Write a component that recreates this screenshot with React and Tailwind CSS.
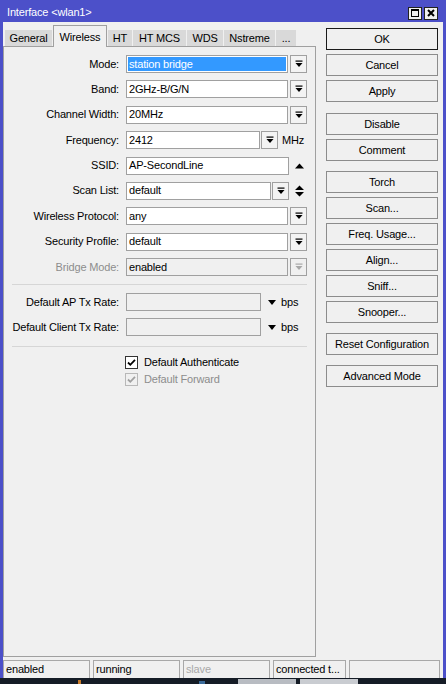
import React from 'react';

const DropIcon = ({ color = '#000' }) => (
  <svg width="8" height="8" viewBox="0 0 8 8">
    <rect x="0.5" y="0.5" width="7" height="1.2" fill={color} />
    <path d="M0.5 3h7L4 7z" fill={color} />
  </svg>
);

const DropButton = ({ disabled }) => (
  <div
    className={`w-[17px] h-[18px] flex items-center justify-center border border-[#a0a0a0] ${
      disabled ? 'bg-[#f0f0f0]' : 'bg-[#f3f3f3]'
    }`}
  >
    <DropIcon color={disabled ? '#a8a8a8' : '#000'} />
  </div>
);

const Field = ({ value, width = 162, selected, disabled }) => (
  <div
    className={`h-[18px] border border-[#a0a0a0] flex items-center ${
      disabled ? 'bg-[#f0f0f0]' : 'bg-white'
    } ${selected ? 'p-px' : ''}`}
    style={{ width }}
  >
    {selected ? (
      <div className="h-full w-full bg-[#3399ff] text-white flex items-center px-[1px]">{value}</div>
    ) : (
      <span className="px-[2px] text-black">{value}</span>
    )}
  </div>
);

const Row = ({ label, dim, children }) => (
  <div className="flex items-center h-[18px]">
    <div className={`w-[115px] text-right ${dim ? 'text-[#8d8d8d]' : 'text-black'}`}>{label}</div>
    <div className="ml-[7px] flex items-center">{children}</div>
  </div>
);

const Check = ({ disabled }) => (
  <div
    className={`w-[13px] h-[13px] border flex items-center justify-center ${
      disabled ? 'border-[#b8b8b8] bg-[#f0f0f0]' : 'border-[#333] bg-white'
    }`}
  >
    <svg width="9" height="9" viewBox="0 0 9 9">
      <path d="M1 4.5l2.3 2.3L8 1.8" fill="none" stroke={disabled ? '#a0a0a0' : '#000'} strokeWidth="1.8" />
    </svg>
  </div>
);

const Btn = ({ children, className = '', dark }) => (
  <div
    className={`h-[22px] w-[112px] flex items-center justify-center border ${
      dark ? 'border-[#1a1a1a]' : 'border-[#8c8c8c]'
    } bg-[#f0f0f0] text-black ${className}`}
  >
    {children}
  </div>
);

const tabs = [
  { name: 'General', w: 47 },
  { name: 'Wireless', w: 54, active: true },
  { name: 'HT', w: 24 },
  { name: 'HT MCS', w: 53 },
  { name: 'WDS', w: 36 },
  { name: 'Nstreme', w: 51 },
  { name: '...', w: 20 },
];

const App = () => {
  return (
    <div className="w-[446px] h-[684px] flex flex-col bg-[#4c50c9] font-['Liberation_Sans',Arial,sans-serif] text-[11px] tracking-[-0.17px] leading-none overflow-hidden">
      {/* title bar */}
      <div className="h-[22px] flex items-center pl-[7px] pr-[8px] text-white shrink-0">
        <span className="pt-[3px]">Interface &lt;wlan1&gt;</span>
        <div className="ml-auto flex gap-[2px] pt-[4px]">
          <div className="w-[14px] h-[13px] bg-[#f0f0f0] border border-[#222] flex items-center justify-center">
            <div className="w-[8px] h-[8px] border border-black border-t-2"></div>
          </div>
          <div className="w-[14px] h-[13px] bg-[#f0f0f0] border border-[#222] flex items-center justify-center">
            <svg width="8" height="8" viewBox="0 0 8 8">
              <path d="M1 1l6 6M7 1L1 7" stroke="#000" strokeWidth="2" />
            </svg>
          </div>
        </div>
      </div>

      <div className="flex-1 mx-[3px] bg-[#f0f0f0] flex flex-col">
        <div className="flex flex-1">
          {/* left column */}
          <div className="w-[313px] flex flex-col">
            <div className="h-[24px] flex items-end pl-[2px] gap-[1px] shrink-0">
              {tabs.map((t) =>
                t.active ? (
                  <div
                    key={t.name}
                    className="h-[22px] -mb-px relative z-10 bg-[#f0f0f0] border border-b-0 border-[#a0a0a0] flex justify-center pt-[6px] text-black"
                    style={{ width: t.w }}
                  >
                    {t.name}
                  </div>
                ) : (
                  <div
                    key={t.name}
                    className="h-[16px] bg-[#d9d9d9] flex items-center justify-center text-black"
                    style={{ width: t.w }}
                  >
                    {t.name}
                  </div>
                )
              )}
            </div>
            <div className="flex-1 border border-[#a0a0a0] pt-[8px]">
              <div className="flex flex-col gap-[7.4px]">
                <Row label="Mode:">
                  <Field value="station bridge" selected />
                  <div className="ml-[2px]"><DropButton /></div>
                </Row>
                <Row label="Band:">
                  <Field value="2GHz-B/G/N" />
                  <div className="ml-[2px]"><DropButton /></div>
                </Row>
                <Row label="Channel Width:">
                  <Field value="20MHz" />
                  <div className="ml-[2px]"><DropButton /></div>
                </Row>
                <Row label="Frequency:">
                  <Field value="2412" width={134} />
                  <div className="ml-[1px]"><DropButton /></div>
                  <span className="ml-[4px] text-black">MHz</span>
                </Row>
                <Row label="SSID:">
                  <Field value="AP-SecondLine" width={163} />
                  <svg className="ml-[6px]" width="9" height="6" viewBox="0 0 9 6">
                    <path d="M0 5.5h9L4.5 0.5z" fill="#000" />
                  </svg>
                </Row>
                <Row label="Scan List:">
                  <Field value="default" width={145} />
                  <div className="ml-[1px]"><DropButton /></div>
                  <svg className="ml-[6px]" width="9" height="12" viewBox="0 0 9 12">
                    <path d="M0 5h9L4.5 0.5z M0 7h9L4.5 11.5z" fill="#000" />
                  </svg>
                </Row>
                <Row label="Wireless Protocol:">
                  <Field value="any" />
                  <div className="ml-[2px]"><DropButton /></div>
                </Row>
                <Row label="Security Profile:">
                  <Field value="default" />
                  <div className="ml-[2px]"><DropButton /></div>
                </Row>
                <Row label="Bridge Mode:" dim>
                  <Field value="enabled" disabled />
                  <div className="ml-[2px]"><DropButton disabled /></div>
                </Row>
              </div>

              <div className="mt-[8px] mx-[8px] border-t border-[#d6d6d6]"></div>

              <div className="mt-[8px] flex flex-col gap-[7px]">
                <Row label="Default AP Tx Rate:">
                  <Field value="" width={135} disabled />
                  <svg className="ml-[7px]" width="8" height="5" viewBox="0 0 8 5">
                    <path d="M0 0h8L4 5z" fill="#000" />
                  </svg>
                  <span className="ml-[5px] text-black">bps</span>
                </Row>
                <Row label="Default Client Tx Rate:">
                  <Field value="" width={135} disabled />
                  <svg className="ml-[7px]" width="8" height="5" viewBox="0 0 8 5">
                    <path d="M0 0h8L4 5z" fill="#000" />
                  </svg>
                  <span className="ml-[5px] text-black">bps</span>
                </Row>
              </div>

              <div className="mt-[10px] mx-[8px] border-t border-[#d6d6d6]"></div>

              <div className="mt-[9px] pl-[121px] flex flex-col gap-[4px]">
                <div className="flex items-center h-[13px]">
                  <Check />
                  <span className="ml-[6px] text-black">Default Authenticate</span>
                </div>
                <div className="flex items-center h-[13px]">
                  <Check disabled />
                  <span className="ml-[6px] text-[#8d8d8d]">Default Forward</span>
                </div>
              </div>
            </div>
          </div>

          {/* right column */}
          <div className="ml-[10px] pt-[6px] flex flex-col gap-[4px]">
            <Btn dark>OK</Btn>
            <Btn>Cancel</Btn>
            <Btn>Apply</Btn>
            <Btn className="mt-[7px]">Disable</Btn>
            <Btn>Comment</Btn>
            <Btn className="mt-[6px]">Torch</Btn>
            <Btn>Scan...</Btn>
            <Btn>Freq. Usage...</Btn>
            <Btn>Align...</Btn>
            <Btn>Sniff...</Btn>
            <Btn>Snooper...</Btn>
            <Btn className="mt-[6px]">Reset Configuration</Btn>
            <Btn className="mt-[6px]">Advanced Mode</Btn>
          </div>
        </div>

        {/* status bar */}
        <div className="h-[18px] mt-[3px] flex gap-[3px] shrink-0">
          <div className="w-[87px] border border-b-0 border-[#a8a8a8] flex items-center pl-[2px] text-black">enabled</div>
          <div className="w-[87px] border border-b-0 border-[#a8a8a8] flex items-center pl-[2px] text-black">running</div>
          <div className="w-[87px] border border-b-0 border-[#a8a8a8] flex items-center pl-[2px] text-[#a8a8a8]">slave</div>
          <div className="w-[73px] border border-b-0 border-[#a8a8a8] flex items-center pl-[2px] text-black">connected t...</div>
          <div className="w-[91px] border border-b-0 border-[#a8a8a8]"></div>
        </div>
      </div>

      {/* taskbar */}
      <div className="h-[6px] bg-[#151c26] flex shrink-0">
        <div className="ml-[78px] mt-[2px] w-[3px] h-[4px] bg-[#c87a2a]"></div>
        <div className="ml-[118px] mt-[3px] w-[6px] h-[3px] bg-[#3a6a9a]"></div>
        <div className="ml-[33px] mt-[1px] w-[58px] h-[5px] bg-[#b8bcc2]"></div>
        <div className="ml-[4px] mt-[1px] w-[58px] h-[5px] bg-[#c9ccd1]"></div>
      </div>
    </div>
  );
};

export default App;
